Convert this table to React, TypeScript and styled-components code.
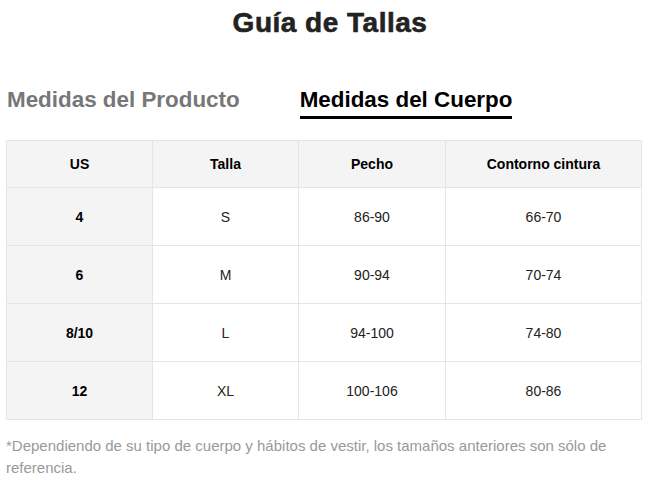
import React from "react";
import styled, { createGlobalStyle } from "styled-components";

const GlobalStyle = createGlobalStyle`
  body {
    margin: 0;
    background: #fff;
    font-family: "Liberation Sans", Arial, sans-serif;
    color: #000;
  }
`;

const Page = styled.div`
  padding: 0 8px 0 6px;
`;

const Title = styled.h2`
  margin: 0;
  padding: 6px 0 0 12px;
  text-align: center;
  font-size: 28px;
  letter-spacing: 0.5px;
  line-height: 34px;
  font-weight: 700;
  color: #222;
  -webkit-text-stroke: 0.6px #222;
`;

const Tabs = styled.div`
  display: flex;
  gap: 60px;
  margin-top: 47px;
  padding-left: 1px;
`;

const Tab = styled.div<{ $active?: boolean }>`
  font-size: 22.4px;
  font-weight: 700;
  line-height: 26px;
  padding-bottom: 3px;
  color: ${(p) => (p.$active ? "#000" : "#777")};
  border-bottom: 3px solid ${(p) => (p.$active ? "#000" : "transparent")};
`;

const Table = styled.table`
  margin-top: 21px;
  width: 636px;
  border-collapse: collapse;
  table-layout: fixed;
  font-size: 14px;
`;

const Th = styled.th`
  background: #f4f4f4;
  border: 1px solid #e5e5e5;
  height: 46px;
  padding: 0;
  font-weight: 700;
  color: #000;
`;

const Td = styled.td<{ $head?: boolean }>`
  border: 1px solid #e5e5e5;
  height: 57px;
  padding: 0;
  text-align: center;
  background: ${(p) => (p.$head ? "#f4f4f4" : "#fff")};
  font-weight: ${(p) => (p.$head ? 700 : 400)};
  color: ${(p) => (p.$head ? "#000" : "#222")};
`;

const Note = styled.p`
  margin: 15px 0 0;
  font-size: 15px;
  line-height: 22px;
  color: #999;
`;

const rows = [
  ["4", "S", "86-90", "66-70"],
  ["6", "M", "90-94", "70-74"],
  ["8/10", "L", "94-100", "74-80"],
  ["12", "XL", "100-106", "80-86"],
];

export default function App() {
  return (
    <Page>
      <GlobalStyle />
      <Title>Guía de Tallas</Title>
      <Tabs>
        <Tab>Medidas del Producto</Tab>
        <Tab $active>Medidas del Cuerpo</Tab>
      </Tabs>
      <Table>
        <colgroup>
          <col style={{ width: 146 }} />
          <col style={{ width: 146 }} />
          <col style={{ width: 147 }} />
          <col />
        </colgroup>
        <thead>
          <tr>
            <Th>US</Th>
            <Th>Talla</Th>
            <Th>Pecho</Th>
            <Th>Contorno cintura</Th>
          </tr>
        </thead>
        <tbody>
          {rows.map((r) => (
            <tr key={r[0]}>
              <Td $head>{r[0]}</Td>
              <Td>{r[1]}</Td>
              <Td>{r[2]}</Td>
              <Td>{r[3]}</Td>
            </tr>
          ))}
        </tbody>
      </Table>
      <Note>
        *Dependiendo de su tipo de cuerpo y hábitos de vestir, los tamaños anteriores son sólo de
        referencia.
      </Note>
    </Page>
  );
}
